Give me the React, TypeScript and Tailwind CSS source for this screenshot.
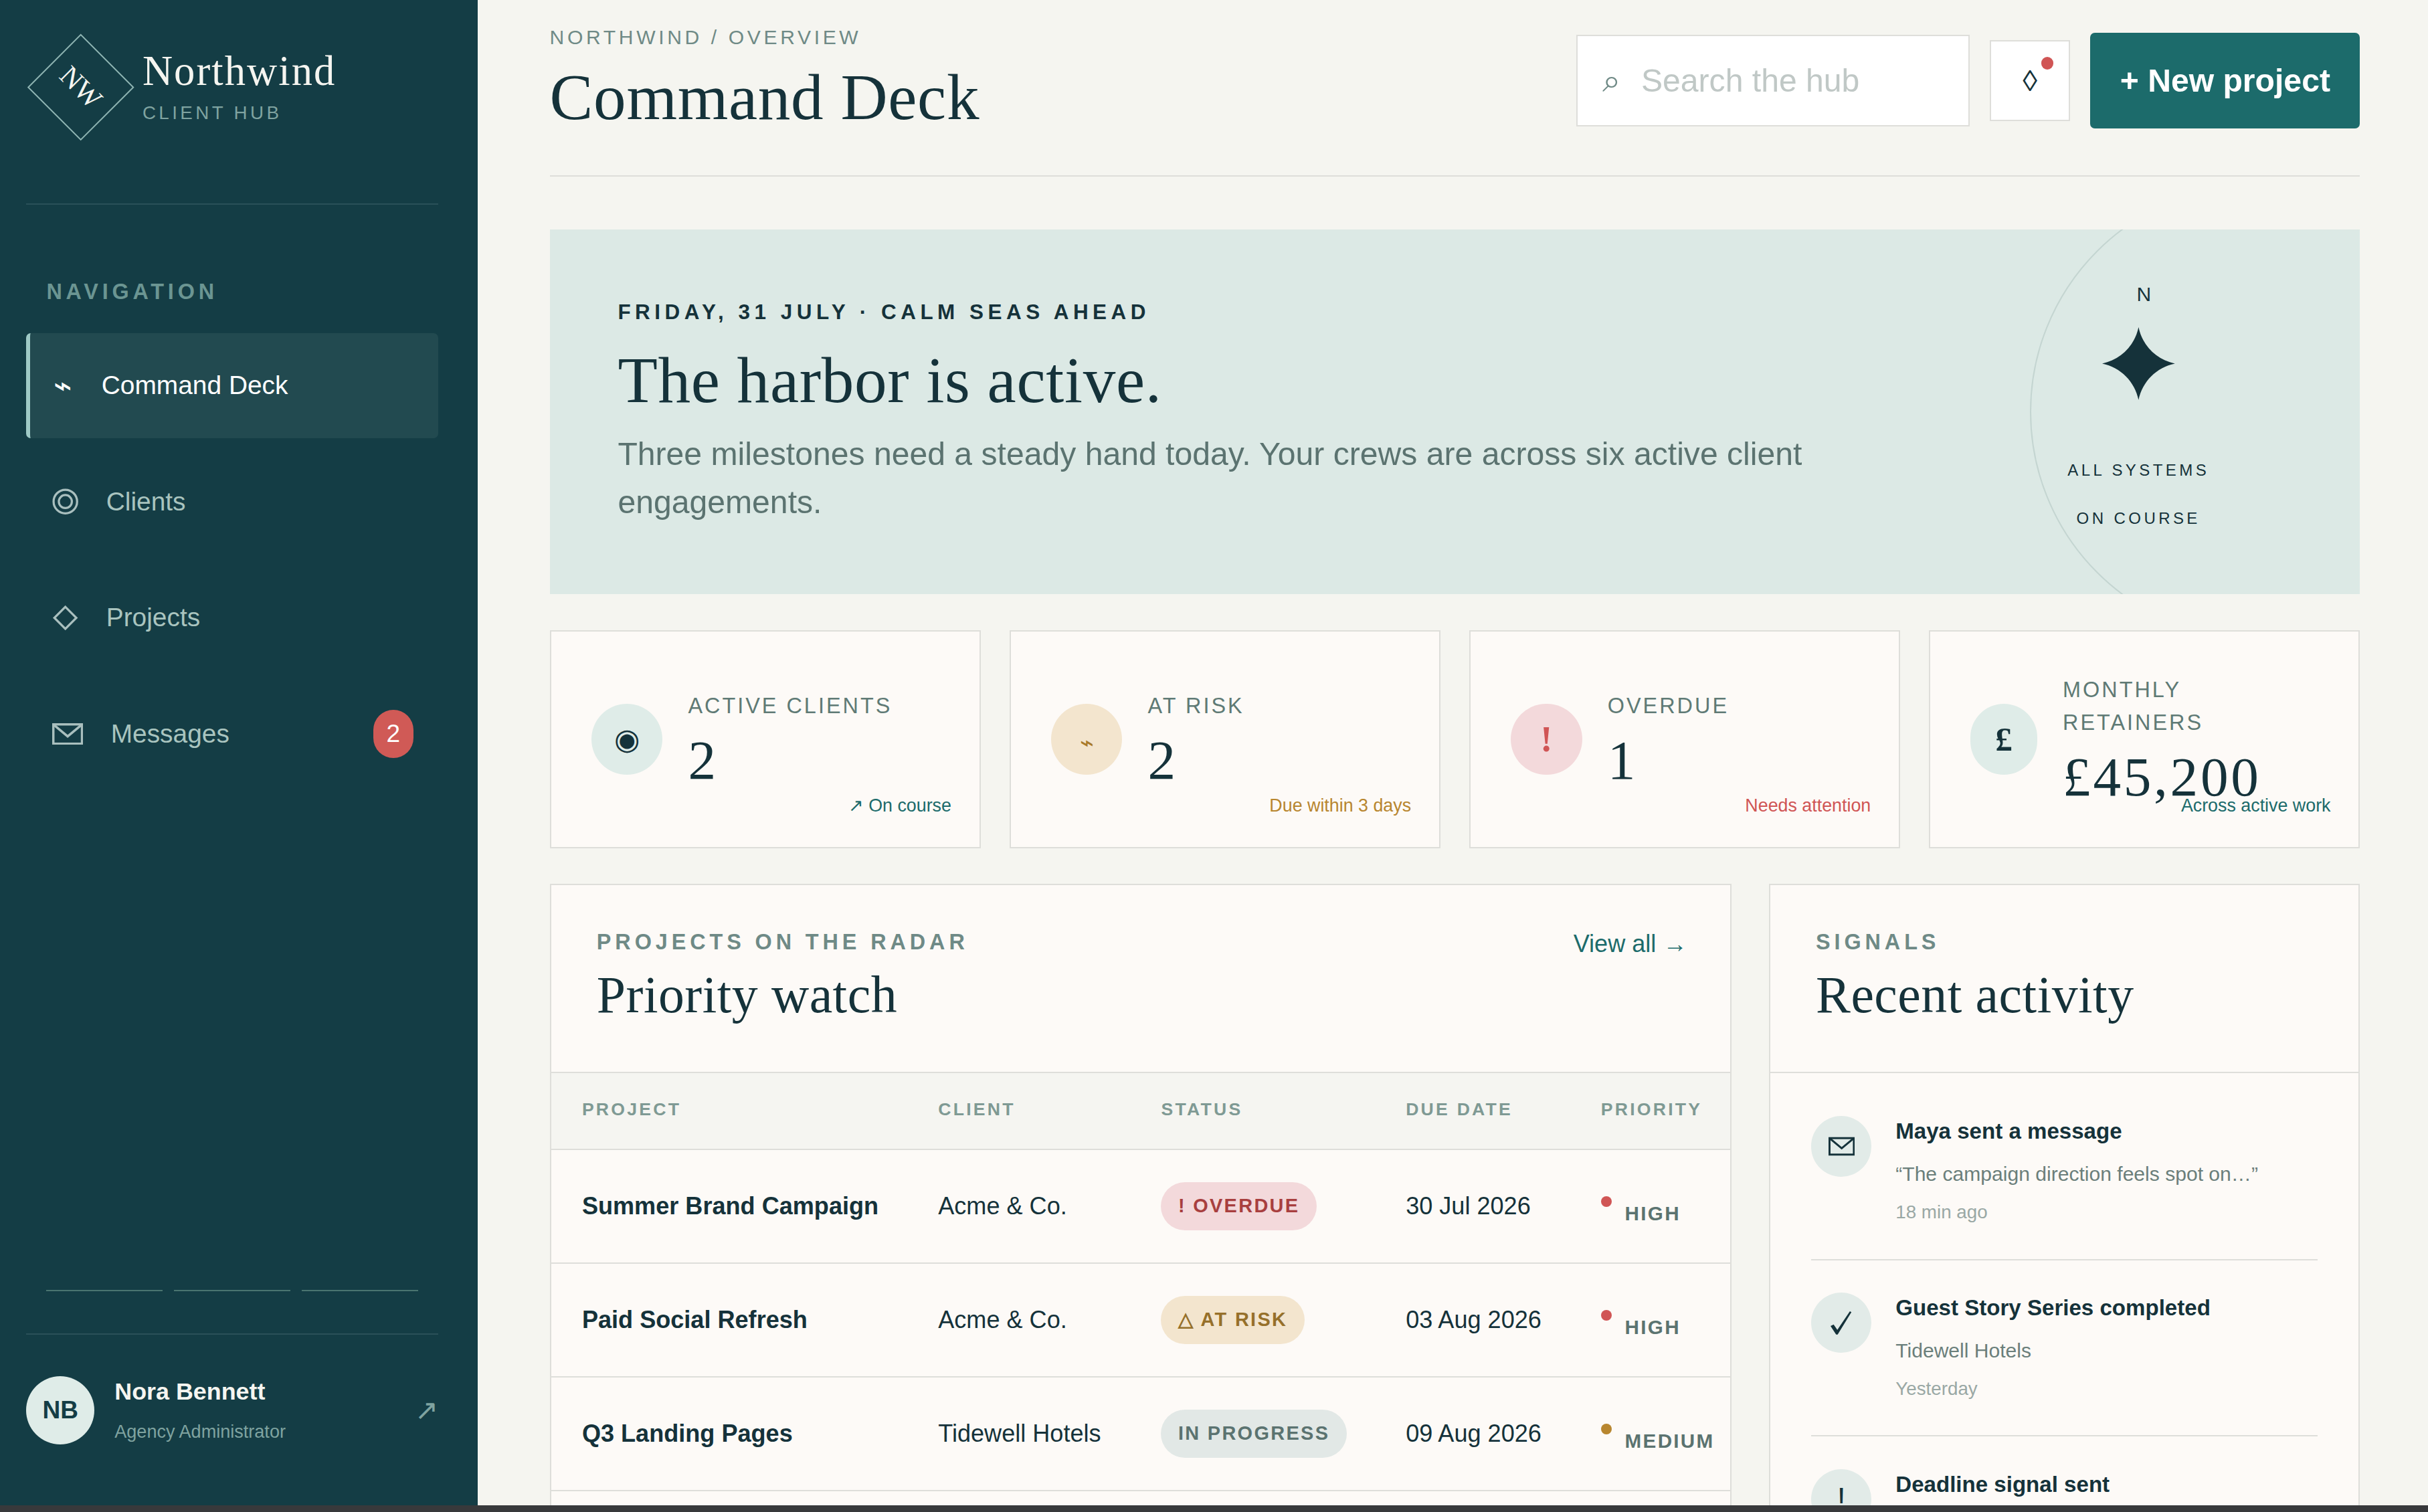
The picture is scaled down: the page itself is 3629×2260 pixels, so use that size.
import type { ReactNode } from "react";

const sans = "[font-family:'Liberation_Sans',Arial,sans-serif]";
const serif = "[font-family:'Liberation_Serif','Times_New_Roman',serif]";

function MailIcon({ width, height }: { width: number; height: number }) {
  return (
    <svg width={width} height={height} viewBox="0 0 20 14" fill="none" stroke="currentColor" strokeWidth="1.5">
      <rect x="0.75" y="0.75" width="18.5" height="12.5" />
      <path d="M1 1 L10 8.5 L19 1" />
    </svg>
  );
}

function RingsIcon() {
  return (
    <svg width="17" height="17" viewBox="0 0 17 17" fill="none" stroke="currentColor" strokeWidth="1.4">
      <circle cx="8.5" cy="8.5" r="7.6" />
      <circle cx="8.5" cy="8.5" r="4.2" />
    </svg>
  );
}

function DiamondIcon() {
  return (
    <svg width="17" height="16" viewBox="0 0 17 16" fill="none" stroke="currentColor" strokeWidth="1.4">
      <path d="M8.5 0.9 L15.6 8 L8.5 15.1 L1.4 8 Z" />
    </svg>
  );
}

function CheckIcon() {
  return (
    <svg width="14" height="15" viewBox="0 0 14 15" fill="currentColor">
      <path d="M0 9.5 L2 8.5 L4.4 12 L12.5 0 L13.5 0.5 L4.6 15 L3.6 15 Z" />
    </svg>
  );
}

const navItems: { label: string; icon: ReactNode; iconClass: string; active?: boolean; badge?: number }[] = [
  { label: "Command Deck", icon: "⌁", iconClass: "w-[14px] text-[20px]", active: true },
  { label: "Clients", icon: <RingsIcon />, iconClass: "w-[17px] text-[#a9bfbe]" },
  { label: "Projects", icon: <DiamondIcon />, iconClass: "w-[17px] text-[#a9bfbe]" },
  { label: "Messages", icon: <MailIcon width={20} height={14} />, iconClass: "w-[20px] text-[#a9bfbe]", badge: 2 },
];

const stats = [
  { label: "Active clients", value: "2", icon: "◉", iconClass: "w-[46px] bg-[#dfece8] text-[#15323a] text-[19px]", note: "↗ On course", noteClass: "text-[#1c6b6b]" },
  { label: "At risk", value: "2", icon: "⌁", iconClass: "w-[46px] bg-[#f3e5ce] text-[#a87a2a] text-[15px] pt-[4px]", note: "Due within 3 days", noteClass: "text-[#b8862f]" },
  { label: "Overdue", value: "1", icon: "!", iconClass: "w-[46px] bg-[#f3d9db] text-[#d05555] text-[24px] font-bold " + serif, note: "Needs attention", noteClass: "text-[#d05555]" },
  { label: "Monthly retainers", value: "£45,200", icon: "£", iconClass: "w-[43px] bg-[#dfece8] text-[#15323a] text-[22px] font-bold " + serif, note: "Across active work", noteClass: "text-[#1c6b6b]" },
];

const projects = [
  { name: "Summer Brand Campaign", client: "Acme & Co.", status: "! Overdue", statusClass: "bg-[#f3d9db] text-[#a83f3f]", due: "30 Jul 2026", priority: "High", dot: "bg-[#d05555]" },
  { name: "Paid Social Refresh", client: "Acme & Co.", status: "△ At risk", statusClass: "bg-[#f3e5ce] text-[#96702a]", due: "03 Aug 2026", priority: "High", dot: "bg-[#d05555]" },
  { name: "Q3 Landing Pages", client: "Tidewell Hotels", status: "In progress", statusClass: "bg-[#e2e8e6] text-[#5b7370]", due: "09 Aug 2026", priority: "Medium", dot: "bg-[#b8862f]" },
];

const activity: { icon: ReactNode; iconClass?: string; title: string; detail?: string; time?: string }[] = [
  { icon: <MailIcon width={17} height={12.5} />, title: "Maya sent a message", detail: "“The campaign direction feels spot on…”", time: "18 min ago" },
  { icon: <CheckIcon />, title: "Guest Story Series completed", detail: "Tidewell Hotels", time: "Yesterday" },
  { icon: "!", iconClass: "text-[20px]", title: "Deadline signal sent" },
];

function Sidebar() {
  return (
    <aside className="flex w-[308.5px] shrink-0 flex-col bg-[#143d45] pr-[25.5px] pl-[17px]">
      <div className="flex h-[132px] items-start border-b border-[#2a5159] pt-[32px]">
        <div className="ml-[10.5px] flex h-[49px] w-[49px] shrink-0 rotate-45 items-center justify-center border border-[#8fb5b3]">
          <span className={`${serif} text-[18px] text-[#f5f5f0]`}>NW</span>
        </div>
        <div className="ml-[15.5px] flex flex-col">
          <span className={`${serif} mt-[-4px] text-[27px] leading-[36px] tracking-[0.9px] text-[#f5f5f0]`}>Northwind</span>
          <span className="mt-[1px] text-[12px] leading-[16px] tracking-[1.9px] text-[#7fa3a0]">CLIENT HUB</span>
        </div>
      </div>

      <p className="mt-[48px] pl-[13px] text-[14px] leading-[17px] font-bold tracking-[2.5px] text-[#6b9592]">NAVIGATION</p>

      <nav className="mt-[18px] flex flex-col gap-[7px]">
        {navItems.map((item) => (
          <a
            key={item.label}
            className={
              item.active
                ? "flex h-[68px] items-center gap-[18px] rounded-[3px] border-l-[3px] border-[#9fcac6] bg-[#224a50] pr-[16px] pl-[14px] text-white"
                : "flex h-[68px] items-center gap-[18px] rounded-[3px] border-l-[3px] border-transparent pr-[16px] pl-[14px] text-[#a9c4bf]"
            }
          >
            <span className={`flex shrink-0 items-center justify-center leading-none ${item.iconClass}`}>{item.icon}</span>
            <span className="text-[16.8px]">{item.label}</span>
            {item.badge ? (
              <span className="ml-auto flex h-[31px] w-[26px] items-center justify-center rounded-full bg-[#d05a56] text-[16px] text-white">
                {item.badge}
              </span>
            ) : null}
          </a>
        ))}
      </nav>

      <div className="mt-auto flex gap-[7.5px] px-[13px]">
        <span className="h-px w-[75px] bg-[#4a7470]" />
        <span className="h-px w-[75px] bg-[#4a7470]" />
        <span className="h-px w-[75px] bg-[#4a7470]" />
      </div>

      <div className="mt-[27px] flex h-[111px] items-start border-t border-[#2a5159] pt-[27px]">
        <div className="flex h-[44px] w-[44px] items-center justify-center rounded-full bg-[#dfece8] text-[16px] font-bold text-[#143d45]">
          NB
        </div>
        <div className="ml-[13px] flex flex-col">
          <span className="mt-[-2px] text-[15.5px] leading-[24px] font-bold text-[#f5f5f0]">Nora Bennett</span>
          <span className="mt-[3px] text-[11.7px] leading-[22px] text-[#7fa3a0]">Agency Administrator</span>
        </div>
        <span className="mt-[10px] ml-auto text-[18px] leading-[24px] text-[#7fa3a0]">↗</span>
      </div>
    </aside>
  );
}

function Header() {
  return (
    <header className="flex h-[114px] items-center justify-between border-b border-[#dededa] pb-[9px]">
      <div className="flex flex-col">
        <span className="mt-[3px] text-[13px] leading-[16px] tracking-[2px] text-[#6f8a86]">NORTHWIND / OVERVIEW</span>
        <h1 className={`${serif} mt-[3px] text-[42px] leading-[56px] tracking-[0.3px] text-[#15323a]`}>Command Deck</h1>
      </div>
      <div className="flex items-center gap-[13px]">
        <label className="flex h-[59px] w-[254px] items-center border border-[#dededa] bg-white pl-[16px]">
          <span className="w-[25px] shrink-0 text-[21px] leading-none text-[#6f8a86]">⌕</span>
          <input placeholder="Search the hub" className="w-[180px] bg-transparent text-[20.8px] outline-none placeholder:text-[#c0c8c6]" />
        </label>
        <button className="relative flex h-[52px] w-[52px] items-center justify-center border border-[#dededa] bg-white text-[19px] text-[#15323a]">
          ◊
          <span className="absolute top-[10px] right-[10px] h-[8px] w-[8px] rounded-full bg-[#d05555]" />
        </button>
        <button className="flex h-[62px] w-[174px] items-center justify-center rounded-[3px] bg-[#1c6b6b] text-[20.8px] font-bold text-white">
          + New project
        </button>
      </div>
    </header>
  );
}

function Hero() {
  return (
    <section className="relative mt-[34px] flex h-[235.5px] items-center justify-between overflow-hidden bg-[#dce9e5] pr-[88px] pl-[44px]">
      <div className="max-w-[800px]">
        <p className="text-[13.6px] leading-[20px] font-bold tracking-[2.8px] text-[#15323a]">FRIDAY, 31 JULY · CALM SEAS AHEAD</p>
        <h2 className={`${serif} mt-[9px] text-[42px] leading-[50px] tracking-[0.3px] text-[#15323a]`}>The harbor is active.</h2>
        <p className="mt-[7px] text-[20.8px] leading-[31px] text-[#5b7370]">
          Three milestones need a steady hand today. Your crews are across six active client engagements.
        </p>
      </div>
      {/* compass ring runs past the right edge of the banner */}
      <div className="absolute top-[-29px] left-[956px] h-[294px] w-[294px] rounded-full border border-[#c4d5d1]" />
      <div className="relative flex w-[110px] flex-col items-center text-[#15323a]">
        <span className="mt-[2px] ml-[7px] text-[13px] leading-[14px]">N</span>
        <svg className="mt-[14px]" width="47" height="47" viewBox="0 0 47 47" fill="#15323a">
          <path d="M23.5 0 C26 12 35 21 47 23.5 C35 26 26 35 23.5 47 C21 35 12 26 0 23.5 C12 21 21 12 23.5 0 Z" />
        </svg>
        <span className="mt-[30px] text-center text-[10.4px] leading-[31px] tracking-[1.9px]">
          ALL SYSTEMS
          <br />
          ON COURSE
        </span>
      </div>
    </section>
  );
}

function StatCards() {
  return (
    <section className="mt-[23.5px] grid h-[141px] grid-cols-4 gap-[18.67px]">
      {stats.map((s) => (
        <div key={s.label} className="relative flex items-center gap-[16.5px] border border-[#dededa] bg-[#fdfaf7] pl-[26px]">
          <div className={`flex h-[46px] shrink-0 items-center justify-center rounded-full ${s.iconClass}`}>{s.icon}</div>
          <div className="flex w-[140px] flex-col pt-[4px]">
            <span className="text-[14px] leading-[21.6px] tracking-[1.3px] text-[#5f7a75] uppercase">{s.label}</span>
            <span className={`${serif} pt-[2px] text-[36px] leading-[44px] tracking-[1.6px] text-[#15323a]`}>{s.value}</span>
          </div>
          <span className={`absolute right-[18px] bottom-[20px] text-[11.6px] leading-[14px] ${s.noteClass}`}>{s.note}</span>
        </div>
      ))}
    </section>
  );
}

function PanelHead({ kicker, title, action }: { kicker: string; title: string; action?: string }) {
  return (
    <div className="flex h-[121px] items-start justify-between border-b border-[#dededa] pt-[28px] pr-[28px] pl-[29.5px]">
      <div>
        <p className="text-[14px] leading-[18px] font-bold tracking-[2.55px] text-[#6f8a86]">{kicker}</p>
        <h3 className={`${serif} mt-[3px] text-[33.6px] leading-[44px] tracking-[0.2px] text-[#15323a]`}>{title}</h3>
      </div>
      {action ? <a className="text-[15.6px] leading-[20px] text-[#1c6b6b]">{action}</a> : null}
    </div>
  );
}

function PriorityTable() {
  const cols = "grid grid-cols-[230px_144px_158px_126px_1fr] items-center";
  return (
    <div className="h-[500px] border border-[#dededa] bg-[#fdfaf7]">
      <PanelHead kicker="PROJECTS ON THE RADAR" title="Priority watch" action="View all →" />
      <div className={`${cols} h-[50px] border-b border-[#dededa] bg-[#f5f5f1] pb-[1px] text-[11.5px] font-bold tracking-[1.4px] text-[#7f9a94]`}>
        <span className="pl-[20px]">PROJECT</span>
        <span className="pl-[20px]">CLIENT</span>
        <span className="pl-[20px]">STATUS</span>
        <span className="pl-[20px]">DUE DATE</span>
        <span className="pl-[20px]">PRIORITY</span>
      </div>
      {projects.map((p) => (
        <div key={p.name} className={`${cols} h-[73.4px] border-b border-[#dededa] text-[15.6px] text-[#15323a]`}>
          <span className="pl-[20px] font-bold">{p.name}</span>
          <span className="pl-[20px]">{p.client}</span>
          <span className="pl-[20px]">
            <span className={`inline-flex h-[31px] items-center rounded-full px-[11px] text-[12.5px] font-bold tracking-[1px] uppercase ${p.statusClass}`}>
              {p.status}
            </span>
          </span>
          <span className="pl-[20px]">{p.due}</span>
          <span className="flex items-start gap-[8.5px] pl-[20px]">
            <span className={`mt-[6px] h-[7px] w-[7px] shrink-0 rounded-full ${p.dot}`} />
            <span className="mt-[9px] text-[12.8px] leading-[16px] font-bold tracking-[1px] text-[#5b7370] uppercase">{p.priority}</span>
          </span>
        </div>
      ))}
    </div>
  );
}

function RecentActivity() {
  return (
    <div className="h-[500px] border border-[#dededa] bg-[#fdfaf7]">
      <PanelHead kicker="SIGNALS" title="Recent activity" />
      <div className="px-[26.5px] pt-[7px]">
        {activity.map((a) => (
          <div key={a.title} className="flex h-[114px] gap-[15.5px] border-b border-[#dededa] pt-[21px] last:border-b-0">
            <div className={`flex h-[39px] w-[39px] shrink-0 items-center justify-center rounded-full bg-[#e2ebe8] text-[#15323a] ${a.iconClass ?? ""}`}>
              {a.icon}
            </div>
            <div className="flex flex-col">
              <span className="text-[14.3px] leading-[20px] font-bold text-[#15323a]">{a.title}</span>
              {a.detail ? <span className="mt-[8px] text-[13px] leading-[19px] text-[#6b7f7b]">{a.detail}</span> : null}
              {a.time ? <span className="mt-[7px] text-[12px] leading-[16px] text-[#9aa8a5]">{a.time}</span> : null}
            </div>
          </div>
        ))}
      </div>
    </div>
  );
}

export default function App() {
  return (
    <div className={`${sans} flex h-[976.5px] w-[1568px] flex-col bg-[#f5f5f0] [zoom:2.31441]`}>
      <div className="flex min-h-0 flex-1">
        <Sidebar />
        <main className="min-w-0 flex-1 overflow-hidden pr-[44px] pl-[46.5px]">
          <Header />
          <Hero />
          <StatCards />
          <section className="mt-[23px] grid grid-cols-[2fr_1fr] gap-[24px]">
            <PriorityTable />
            <RecentActivity />
          </section>
        </main>
      </div>
      <div className="h-[4.5px] shrink-0 bg-[#38393b]" />
    </div>
  );
}
